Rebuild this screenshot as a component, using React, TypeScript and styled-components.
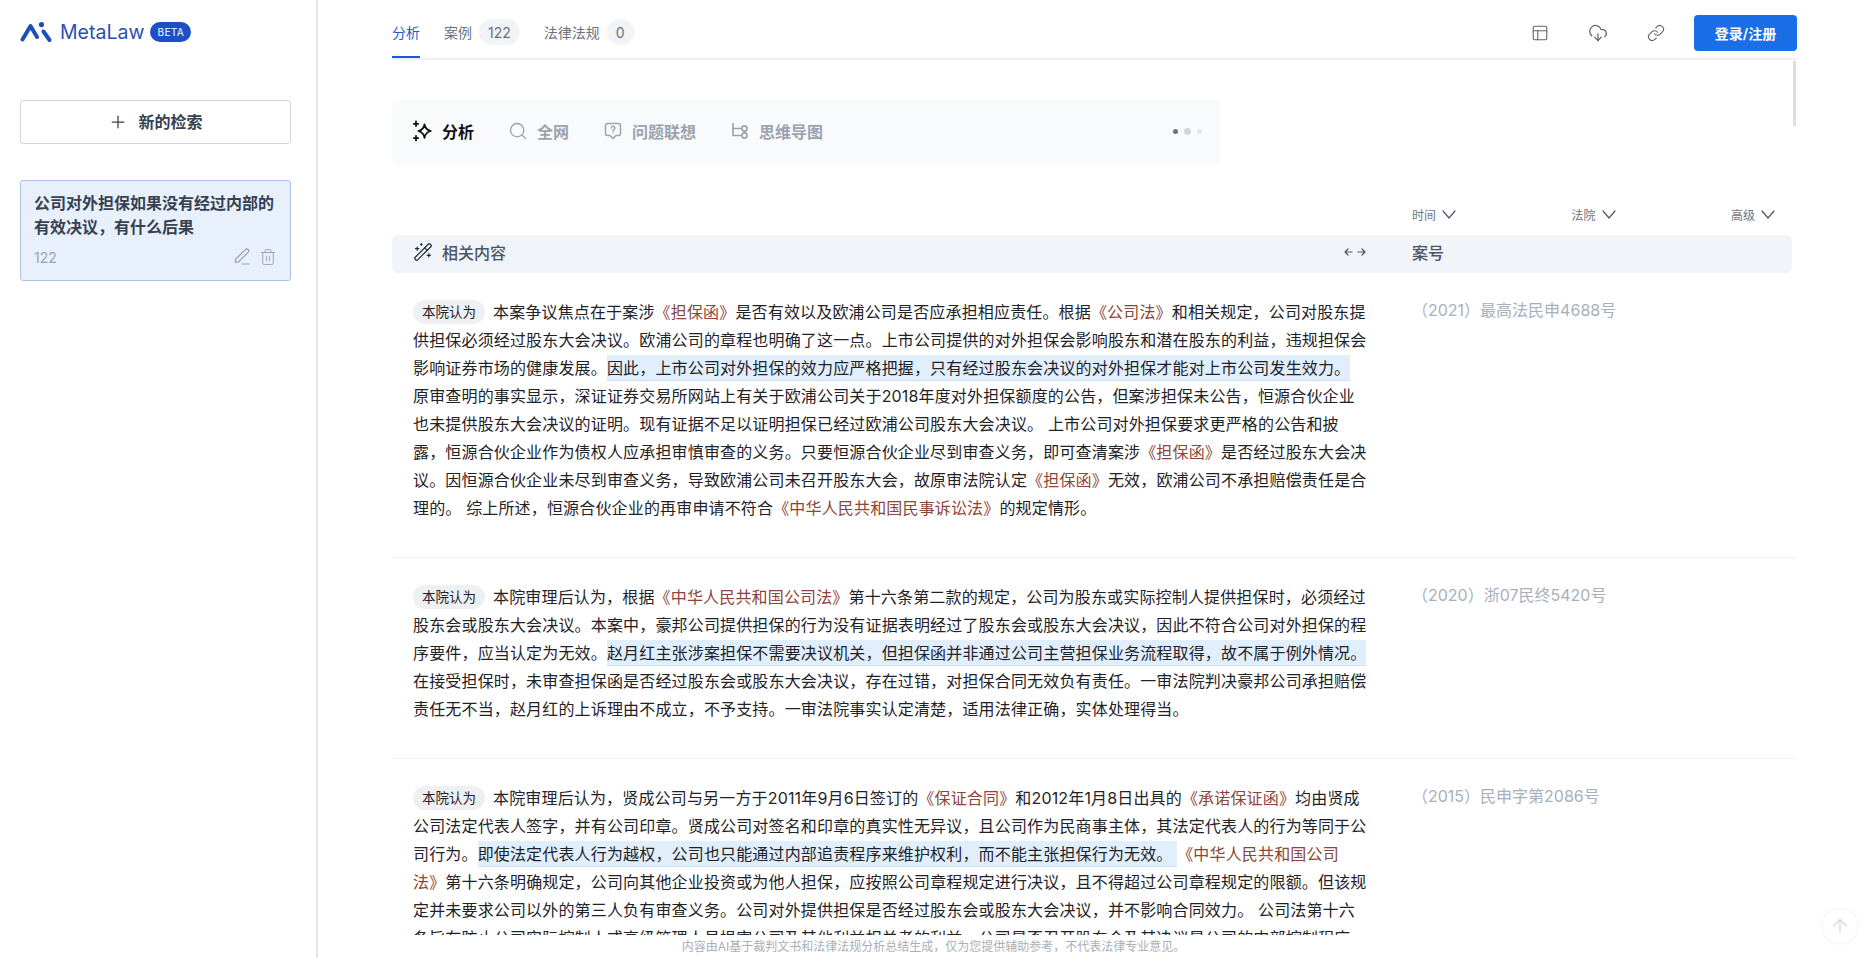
import React from 'react'
import styled, { createGlobalStyle } from 'styled-components'
import { ArrowUp, CloudDownload, Link, PanelsTopLeft, Plus, Search, Trash2, WandSparkles } from 'lucide-react'

const GlobalStyle = createGlobalStyle`
  html, body {
    margin: 0;
    height: 100%;
    background: #fff;
    font-family: Inter, "Noto Sans CJK SC", sans-serif;
    color: #1f2937;
  }
  #root { height: 100%; }
  * { box-sizing: border-box; }
`

// the copy below is typed with plain punctuation, the page shows it full width
const zh = (text: string) => text
  .replace(/,/g, '\uFF0C')
  .replace(/\(/g, '\uFF08')
  .replace(/\)/g, '\uFF09')

// data
interface partInterface {
  text: string,
  kind?: 'law' | 'mark',
  breakAfter?: boolean,
}

interface resultInterface {
  caseNo: string,
  parts: Array<partInterface>,
}

const results: Array<resultInterface> = [
  {
    caseNo: '(2021)最高法民申4688号',
    parts: [
      { text: '本案争议焦点在于案涉' },
      { text: '《担保函》', kind: 'law' },
      { text: '是否有效以及欧浦公司是否应承担相应责任。根据' },
      { text: '《公司法》', kind: 'law' },
      { text: '和相关规定,公司对股东提供担保必须经过股东大会决议。欧浦公司的章程也明确了这一点。上市公司提供的对外担保会影响股东和潜在股东的利益,违规担保会影响证券市场的健康发展。' },
      { text: '因此,上市公司对外担保的效力应严格把握,只有经过股东会决议的对外担保才能对上市公司发生效力。', kind: 'mark' },
      { text: ' 原审查明的事实显示,深证证券交易所网站上有关于欧浦公司关于2018年度对外担保额度的公告,但案涉担保未公告,恒源合伙企业也未提供股东大会决议的证明。现有证据不足以证明担保已经过欧浦公司股东大会决议。 上市公司对外担保要求更严格的公告和披露,恒源合伙企业作为债权人应承担审慎审查的义务。只要恒源合伙企业尽到审查义务,即可查清案涉' },
      { text: '《担保函》', kind: 'law' },
      { text: '是否经过股东大会决议。因恒源合伙企业未尽到审查义务,导致欧浦公司未召开股东大会,故原审法院认定' },
      { text: '《担保函》', kind: 'law' },
      { text: '无效,欧浦公司不承担赔偿责任是合理的。 综上所述,恒源合伙企业的再审申请不符合' },
      { text: '《中华人民共和国民事诉讼法》', kind: 'law' },
      { text: '的规定情形。' },
    ],
  },
  {
    caseNo: '(2020)浙07民终5420号',
    parts: [
      { text: '本院审理后认为,根据' },
      { text: '《中华人民共和国公司法》', kind: 'law' },
      { text: '第十六条第二款的规定,公司为股东或实际控制人提供担保时,必须经过股东会或股东大会决议。本案中,豪邦公司提供担保的行为没有证据表明经过了股东会或股东大会决议,因此不符合公司对外担保的程序要件,应当认定为无效。' },
      { text: '赵月红主张涉案担保不需要决议机关,但担保函并非通过公司主营担保业务流程取得,故不属于例外情况。', kind: 'mark' },
      { text: ' 在接受担保时,未审查担保函是否经过股东会或股东大会决议,存在过错,对担保合同无效负有责任。一审法院判决豪邦公司承担赔偿责任无不当,赵月红的上诉理由不成立,不予支持。一审法院事实认定清楚,适用法律正确,实体处理得当。' },
    ],
  },
  {
    caseNo: '(2015)民申字第2086号',
    parts: [
      { text: '本院审理后认为,贤成公司与另一方于2011年9月6日签订的' },
      { text: '《保证合同》', kind: 'law' },
      { text: '和2012年1月8日出具的' },
      { text: '《承诺保证函》', kind: 'law' },
      { text: '均由贤成公司法定代表人签字,并有公司印章。贤成公司对签名和印章的真实性无异议,且公司作为民商事主体,其法定代表人的行为等同于公司行为。' },
      { text: '即使法定代表人行为越权,公司也只能通过内部追责程序来维护权利,而不能主张担保行为无效。 ', kind: 'mark' },
      { text: '《中华人民共和国公司', kind: 'law', breakAfter: true },
      { text: '法》', kind: 'law' },
      { text: '第十六条明确规定,公司向其他企业投资或为他人担保,应按照公司章程规定进行决议,且不得超过公司章程规定的限额。但该规定并未要求公司以外的第三人负有审查义务。公司对外提供担保是否经过股东会或股东大会决议,并不影响合同效力。 公司法第十六条旨在防止公司实际控制人或高级管理人员损害公司及其他利益相关者的利益,公司是否召开股东会及其决议是公司的内部控制程序,不能约束第三人。' },
    ],
  },
]

// icons
const LogoMark = () => (
  <svg width="32" height="20" viewBox="0 0 32 20" fill="none" stroke="#1f4fb5" strokeWidth="4" strokeLinecap="round">
    <path d="M2.5 17.5 L10.5 4 L17 15" strokeLinejoin="round" />
    <path d="M23.5 9.5 L29.5 18" />
    <circle cx="21.5" cy="2.6" r="2.6" fill="#1f4fb5" stroke="none" />
  </svg>
)

const SparkIcon = () => (
  <svg width="22" height="22" viewBox="0 0 22 22" fill="none" stroke="#111" strokeWidth="1.8" strokeLinejoin="round" strokeLinecap="round">
    <path d="M13.5 4.5 C14 8 15.8 10 19.8 11 C15.8 12 14 14 13.5 17.8 C13 14 11 12 7.4 11 C11 10 13 8 13.5 4.5 Z" />
    <path d="M5 1.5 V6 M2.8 3.8 H7.2" />
    <path d="M5 15.8 V20.4 M2.8 18.1 H7.2" />
  </svg>
)

const QuestionIcon = () => (
  <svg width="20" height="20" viewBox="0 0 20 20" fill="none" stroke="#9ca3af" strokeWidth="1.5" strokeLinejoin="round" strokeLinecap="round">
    <path d="M4.5 2.5 H15.5 A2 2 0 0 1 17.5 4.5 V12.5 A2 2 0 0 1 15.5 14.5 H13 L10 17.5 L7 14.5 H4.5 A2 2 0 0 1 2.5 12.5 V4.5 A2 2 0 0 1 4.5 2.5 Z" />
    <path d="M8.3 7 A1.8 1.8 0 1 1 10.6 8.8 Q10 9.1 10 10" />
    <path d="M10 12 V12.1" />
  </svg>
)

const MindMapIcon = () => (
  <svg width="20" height="20" viewBox="0 0 20 20" fill="none" stroke="#9ca3af" strokeWidth="1.6" strokeLinecap="round">
    <path d="M3 2.5 V14.5 H11.5" />
    <path d="M3 7.5 H11.5" />
    <circle cx="14.5" cy="7.5" r="2.6" />
    <circle cx="14.5" cy="14.5" r="2.6" />
  </svg>
)

const PenIcon = () => (
  <svg width="18" height="18" viewBox="0 0 18 18" fill="none" stroke="#9a9fa8" strokeWidth="1.2" strokeLinejoin="round" strokeLinecap="round">
    <path d="M2.2 14.2 L2.8 11 L12.4 1.6 A1.6 1.6 0 0 1 15.2 4.2 L5.6 13.8 Z" />
    <path d="M9 16 H16" />
  </svg>
)

const ChevronIcon = () => (
  <svg width="14" height="9" viewBox="0 0 14 9" fill="none" stroke="#4b5563" strokeWidth="1.2" strokeLinecap="round" strokeLinejoin="round">
    <path d="M1 1 L7 8 L13 1" />
  </svg>
)

const SwapIcon = () => (
  <svg width="22" height="10" viewBox="0 0 22 10" fill="none" stroke="#4b5563" strokeWidth="1.2" strokeLinecap="round" strokeLinejoin="round">
    <path d="M1 5 H8 M4 2 L1 5 L4 8" />
    <path d="M14 5 H21 M18 2 L21 5 L18 8" />
  </svg>
)

const App: React.FC = () => {
  return <>
    <GlobalStyle />
    <Page>
      <Sidebar>
        <Logo>
          <LogoMark />
          <LogoName>MetaLaw</LogoName>
          <BetaBadge>BETA</BetaBadge>
        </Logo>
        <NewSearchButton type="button">
          <Plus size={20} strokeWidth={1.5} color="#374151" />
          <span>新的检索</span>
        </NewSearchButton>
        <HistoryCard>
          <HistoryTitle>{zh('公司对外担保如果没有经过内部的有效决议,有什么后果')}</HistoryTitle>
          <HistoryMeta>
            <span>122</span>
            <HistoryActions>
              <PenIcon />
              <Trash2 size={18} strokeWidth={1.2} color="#9a9fa8" />
            </HistoryActions>
          </HistoryMeta>
        </HistoryCard>
      </Sidebar>

      <Main>
        <TopBar>
          <Tab $active>分析</Tab>
          <Tab>案例<CountChip>122</CountChip></Tab>
          <Tab>法律法规<CountChip>0</CountChip></Tab>
          <TopActions>
            <TopIconButton><PanelsTopLeft size={18} strokeWidth={1.5} /></TopIconButton>
            <TopIconButton><CloudDownload size={20} strokeWidth={1.5} /></TopIconButton>
            <TopIconButton><Link size={18} strokeWidth={1.5} /></TopIconButton>
            <LoginButton type="button">登录/注册</LoginButton>
          </TopActions>
        </TopBar>

        <ScrollArea>
          <ScrollThumb />
          <ModePanel>
            <Mode $active><SparkIcon />分析</Mode>
            <Mode><Search size={20} strokeWidth={1.6} color="#9ca3af" />全网</Mode>
            <Mode><QuestionIcon />问题联想</Mode>
            <Mode><MindMapIcon />思维导图</Mode>
            <Dots>
              <Dot $size={5} $color="#6b7280" />
              <Dot $size={7} $color="#d1d5db" />
              <Dot $size={5} $color="#e5e7eb" />
            </Dots>
          </ModePanel>

          <FilterRow>
            <Filter>时间 <ChevronIcon /></Filter>
            <Filter>法院 <ChevronIcon /></Filter>
            <Filter>高级 <ChevronIcon /></Filter>
          </FilterRow>

          <TableHead>
            <HeadTitle>
              <WandSparkles size={20} strokeWidth={1.4} color="#1f2937" />
              相关内容
              <SwapSlot><SwapIcon /></SwapSlot>
            </HeadTitle>
            <HeadCase>案号</HeadCase>
          </TableHead>

          {results.map(result => (
            <ResultRow key={result.caseNo}>
              <ResultText>
                <CourtChip>本院认为</CourtChip>
                {result.parts.map((part, i) => {
                  if (part.kind === 'law') return <LawRef key={i}>{part.text}{part.breakAfter && <br />}</LawRef>
                  if (part.kind === 'mark') return <Marked key={i}>{zh(part.text)}</Marked>
                  return <span key={i}>{zh(part.text)}</span>
                })}
              </ResultText>
              <CaseNo>{zh(result.caseNo)}</CaseNo>
            </ResultRow>
          ))}
        </ScrollArea>

        <Disclaimer>{zh('内容由AI基于裁判文书和法律法规分析总结生成,仅为您提供辅助参考,不代表法律专业意见。')}</Disclaimer>
      </Main>

      <BackTop><ArrowUp size={22} strokeWidth={1.3} color="#d1d5db" /></BackTop>
    </Page>
  </>
}

const Page = styled.div`
  position: relative;
  display: flex;
  height: 100vh;
  overflow: hidden;
`

const Sidebar = styled.aside`
  flex: none;
  width: 318px;
  padding: 22px 25px 0 20px;
  border-right: 2px solid #e5e7eb;
`

const Logo = styled.div`
  display: flex;
  align-items: center;
  height: 20px;
`

const LogoName = styled.span`
  margin-left: 8px;
  font-size: 19.5px;
  color: #2b50b0;
`

const BetaBadge = styled.span`
  display: flex;
  align-items: center;
  justify-content: center;
  width: 41px;
  height: 20px;
  margin-left: 6px;
  border-radius: 10px;
  background: #1e4fc7;
  color: #dbe6ff;
  font-size: 10px;
  font-weight: 500;
  letter-spacing: 0.3px;
`

const NewSearchButton = styled.button`
  display: flex;
  align-items: center;
  justify-content: center;
  gap: 10px;
  width: 271px;
  height: 44px;
  margin-top: 58px;
  padding-bottom: 2px;
  border: 1px solid #d4d7dd;
  border-radius: 3px;
  background: #fff;
  color: #374151;
  font-family: inherit;
  font-size: 16px;
  font-weight: 600;

  span { margin-bottom: 2px; }
`

const HistoryCard = styled.div`
  width: 271px;
  height: 101px;
  margin-top: 36px;
  padding: 10px 13px;
  border: 1px solid #aec3e3;
  border-radius: 3px;
  background: #e8f0fc;
`

const HistoryTitle = styled.div`
  font-size: 16px;
  font-weight: 600;
  line-height: 24px;
  color: #374151;
`

const HistoryMeta = styled.div`
  display: flex;
  align-items: center;
  justify-content: space-between;
  margin-top: 9px;
  font-size: 14px;
  color: #9ca3af;
`

const HistoryActions = styled.div`
  display: flex;
  align-items: center;
  gap: 8px;
`

const Main = styled.main`
  flex: 1;
  display: flex;
  flex-direction: column;
  min-width: 0;
  padding: 0 75px 0 74px;
`

const TopBar = styled.div`
  flex: none;
  display: flex;
  align-items: flex-start;
  gap: 24px;
  height: 60px;
  border-bottom: 2px solid #eef0f4;
`

const Tab = styled.div<{ $active?: boolean }>`
  display: flex;
  align-items: center;
  gap: 7px;
  height: 58px;
  padding-top: 8px;
  border-bottom: 2px solid ${props => props.$active ? '#1a56db' : 'transparent'};
  color: ${props => props.$active ? '#1d5bd0' : '#6b7280'};
  font-size: 14px;
`

const CountChip = styled.span`
  display: flex;
  align-items: center;
  justify-content: center;
  min-width: 26px;
  height: 26px;
  padding: 0 9px;
  border-radius: 13px;
  background: #f1f3f7;
  color: #6b7280;
  font-size: 14px;
`

const TopActions = styled.div`
  display: flex;
  align-items: center;
  height: 58px;
  margin-left: auto;
  padding-top: 8px;
`

const TopIconButton = styled.div`
  display: flex;
  align-items: center;
  justify-content: center;
  width: 58px;
  color: #5f6673;
`

const LoginButton = styled.button`
  width: 103px;
  height: 36px;
  margin-left: 9px;
  padding-bottom: 2px;
  border: none;
  border-radius: 4px;
  background: #1a6fe8;
  color: #fff;
  font-family: inherit;
  font-size: 14px;
  font-weight: 600;
`

const ScrollArea = styled.div`
  position: relative;
  flex: 1;
  min-height: 0;
  overflow: hidden;
`

const ScrollThumb = styled.div`
  position: absolute;
  top: 1px;
  right: 1px;
  width: 3px;
  height: 65px;
  background: #dcdee2;
`

const ModePanel = styled.div`
  display: flex;
  align-items: center;
  gap: 34px;
  width: 828px;
  height: 65px;
  margin-top: 40px;
  padding: 0 18px 3px 19px;
  border-radius: 4px;
  background: #f8fafc;
`

const Mode = styled.div<{ $active?: boolean }>`
  display: flex;
  align-items: center;
  gap: 9px;
  color: ${props => props.$active ? '#111' : '#9ca3af'};
  font-size: 16px;
  font-weight: 600;
`

const Dots = styled.div`
  display: flex;
  align-items: center;
  gap: 6px;
  margin-left: auto;
`

const Dot = styled.i<{ $size: number, $color: string }>`
  width: ${props => props.$size}px;
  height: ${props => props.$size}px;
  border-radius: 50%;
  background: ${props => props.$color};
`

const FilterRow = styled.div`
  display: flex;
  height: 20px;
  margin: 40px 0 10px;
  padding: 0 0 2px 1020px;
`

const Filter = styled.div`
  flex: none;
  display: flex;
  align-items: center;
  gap: 6px;
  width: 159.5px;
  color: #6b7280;
  font-size: 12px;
`

const TableHead = styled.div`
  display: grid;
  grid-template-columns: 1020px 1fr;
  align-items: center;
  height: 38px;
  margin-right: 5px;
  padding-bottom: 4px;
  border-radius: 6px;
  background: #f1f4f8;
  color: #4b5563;
  font-size: 16px;
  font-weight: 500;
`

const HeadTitle = styled.div`
  display: flex;
  align-items: center;
  gap: 9px;
  padding-left: 21px;
`

const SwapSlot = styled.span`
  display: flex;
  margin-left: auto;
  margin-right: 46px;
`

const HeadCase = styled.div``

const ResultRow = styled.article`
  display: grid;
  grid-template-columns: 1020px 1fr;
  padding: 25px 0 35px;
  border-bottom: 1px solid #f0f2f5;
`

const ResultText = styled.p`
  width: 976px;
  margin: 0;
  padding-left: 21px;
  font-size: 16px;
  line-height: 28px;
  letter-spacing: 0.16px;
  color: #1f2328;
`

const CourtChip = styled.span`
  display: inline-block;
  height: 24px;
  margin-top: 2px;
  margin-right: 8px;
  padding: 0 9px;
  border-radius: 12px;
  background: #eef0f3;
  font-size: 13.5px;
  line-height: 24px;
  letter-spacing: 0;
  vertical-align: top;
`

const LawRef = styled.span`
  color: #8e4438;
`

const Marked = styled.span`
  padding: 3px 0;
  background: #e1effd;
  box-shadow: inset 0 -1px 0 #cfe0f2;
`

const CaseNo = styled.div`
  font-size: 16px;
  line-height: 24px;
  color: #a8afbc;
`

const Disclaimer = styled.div`
  flex: none;
  height: 23px;
  padding-right: 322px;
  color: #a9aeb8;
  font-size: 12px;
  line-height: 24px;
  text-align: center;
  white-space: nowrap;
`

const BackTop = styled.div`
  position: absolute;
  right: 15px;
  bottom: 15px;
  display: flex;
  align-items: center;
  justify-content: center;
  width: 34px;
  height: 34px;
  border-radius: 50%;
  box-shadow: 0 0 4px rgba(0, 0, 0, 0.08);
`

export default App
